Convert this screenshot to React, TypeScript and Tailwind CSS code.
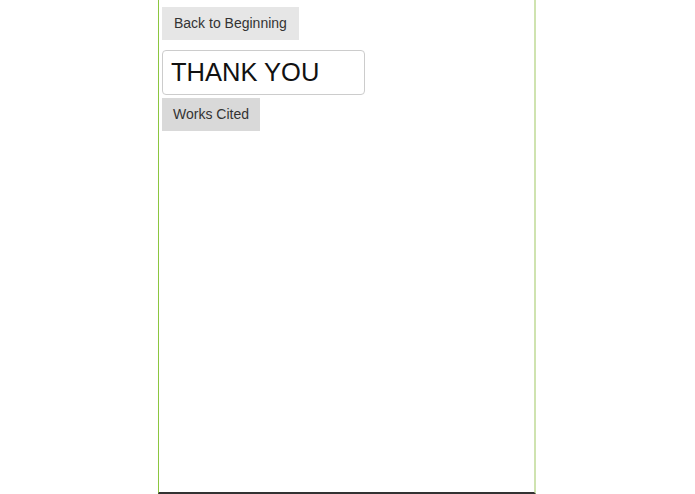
export default function App() {
  return (
    <div className="flex h-[494px] w-[695px] justify-start bg-white font-['Liberation_Sans',Arial,sans-serif]">
      <div className="ml-[158px] flex h-[494px] w-[378px] flex-col items-start border-l border-r-2 border-b-2 border-l-[#8cc63f] border-r-[#cfe3b0] border-b-[#333] pl-[3px] pt-[7px]">
        <button className="h-[33px] bg-[#e6e6e6] px-[12px] text-[14px] text-[#333]">
          Back to Beginning
        </button>
        <input
          readOnly
          value="THANK YOU"
          className="mt-[10px] h-[45px] w-[203px] rounded-[4px] border border-[#ccc] bg-white px-[8px] text-[25.5px] text-[#111] outline-none"
        />
        <button className="mt-[3px] h-[33px] bg-[#d9d9d9] px-[11px] text-[14px] text-[#333]">
          Works Cited
        </button>
      </div>
    </div>
  )
}
